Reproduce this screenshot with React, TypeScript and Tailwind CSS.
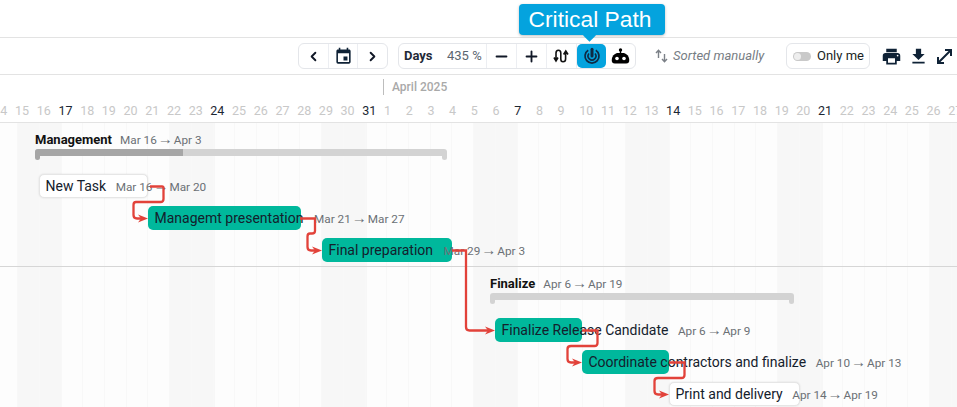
// Gantt chart view, critical path tooltip open
import { ChevronLeft, ChevronRight, Minus, Plus } from "lucide-react";
import { MdPrint, MdFileDownload, MdEvent } from "react-icons/md";

const DAY = 21.71;

const dayLabels = [
  14, 15, 16, 17, 18, 19, 20, 21, 22, 23, 24, 25, 26, 27, 28, 29, 30, 31, 1, 2, 3, 4, 5, 6, 7, 8, 9, 10, 11, 12, 13,
  14, 15, 16, 17, 18, 19, 20, 21, 22, 23, 24, 25, 26, 27,
];
// indexes of the mondays, drawn in dark text
const mondays = [3, 10, 17, 24, 31, 38];

const weekends = [17, 170, 322, 473, 625, 778, 930];

const tasks = [
  { name: "New Task", from: "Mar 16", to: "Mar 20", left: 39, top: 174, width: 109, done: false, gap: 9.5 },
  { name: "Managemt presentation", from: "Mar 21", to: "Mar 27", left: 148, top: 206, width: 153, done: true, gap: 10.5 },
  { name: "Final preparation", from: "Mar 29", to: "Apr 3", left: 322, top: 238, width: 130, done: true, gap: 10.5 },
  { name: "Finalize Release Candidate", from: "Apr 6", to: "Apr 9", left: 495, top: 318, width: 87, done: true, gap: 9.5 },
  { name: "Coordinate contractors and finalize", from: "Apr 10", to: "Apr 13", left: 582, top: 350, width: 87, done: true, gap: 9.5 },
  { name: "Print and delivery", from: "Apr 14", to: "Apr 19", left: 669, top: 382, width: 131, done: false, gap: 9.5 },
];

const links = [
  "M150 186.5 H162 Q163.5 186.5 163.5 188 V199 Q163.5 202 160.5 202 H136 Q133.5 202 133.5 205 V215 Q133.5 218.5 137 218.5 H142",
  "M300 218.5 H315 V231 Q315 233.5 312 233.5 H310 Q307.5 233.5 307.5 236.5 V247 Q307.5 250.5 311 250.5 H316",
  "M452 250.5 H466 V327 Q466 330.5 469.5 330.5 H489",
  "M582 330.5 H597.5 V343 Q597.5 346 594.5 346 H571 Q567.5 346 567.5 349 V359 Q567.5 362.5 571 362.5 H576",
  "M669 362.5 H684.5 V375 Q684.5 378 681.5 378 H658 Q654.5 378 654.5 381 V391 Q654.5 394.5 658 394.5 H663",
];

const arrowHeads = [
  "M148 218.5 L138 214.5 L141 218.5 L138 222.5 Z",
  "M322 250.5 L312 246.5 L315 250.5 L312 254.5 Z",
  "M495 330.5 L485 326.5 L488 330.5 L485 334.5 Z",
  "M582 362.5 L572 358.5 L575 362.5 L572 366.5 Z",
  "M669 394.5 L659 390.5 L662 394.5 L659 398.5 Z",
];

function Dates({ from, to }: { from: string; to: string }) {
  return (
    <span className="text-[11.75px] text-[#6b7075] whitespace-nowrap">
      {from}
      <span className="inline-block w-[17px] text-center leading-none text-[15px] font-['Liberation_Sans',sans-serif]">→</span>
      {to}
    </span>
  );
}

function SummaryBar({ left, width, progress }: { left: number; width: number; progress: number }) {
  return (
    <div className="absolute h-[7px] bg-[#d3d3d3] rounded-t-[3px]" style={{ left, width }}>
      <div className="h-full bg-[#a6a6a6] rounded-tl-[3px]" style={{ width: progress }} />
      <div className={`absolute left-0 top-[6px] w-[5px] h-[5px] rounded-b-[3px] ${progress ? "bg-[#a6a6a6]" : "bg-[#d3d3d3]"}`} />
      <div className="absolute right-0 top-[6px] w-[5px] h-[5px] rounded-b-[3px] bg-[#d3d3d3]" />
    </div>
  );
}

function IconCell({ children, active }: { children: React.ReactNode; active?: boolean }) {
  return (
    <div
      className={`flex-1 h-full flex items-center justify-center border-r border-[#eceef2] last:border-r-0 ${
        active ? "bg-[#04a3de] rounded-[5px] border-r-0" : ""
      }`}
    >
      {children}
    </div>
  );
}

export default function App() {
  return (
    <div className="w-[957px] h-[407px] overflow-hidden bg-white relative font-['Roboto',sans-serif] text-[#1a2433]">
      {/* space above the toolbar */}
      <div className="h-[38px] border-b border-[#e3e3e3]" />

      {/* toolbar */}
      <div className="h-[37px] border-b border-[#e3e3e3] flex items-center pl-[298px]">
        <div className="w-[90px] h-[26px] flex border border-[#e4e6ea] rounded-[6px]">
          <IconCell><ChevronLeft size={15} strokeWidth={3} color="#111827" /></IconCell>
          <IconCell><MdEvent size={19} color="#0f2236" /></IconCell>
          <IconCell><ChevronRight size={15} strokeWidth={3} color="#111827" /></IconCell>
        </div>

        <div className="ml-[10px] w-[238px] h-[26px] flex items-center border border-[#e4e6ea] rounded-[6px]">
          <span className="ml-[5px] w-[43px] text-[13px] font-bold text-[#1f2a37]">Days</span>
          <span className="w-[39px] text-[13px] text-[#5c6670]">435 %</span>
          <div className="flex-1 h-full flex border-l border-[#eceef2]">
            <IconCell><Minus size={17} strokeWidth={2.6} color="#111827" /></IconCell>
            <IconCell><Plus size={17} strokeWidth={2.6} color="#111827" /></IconCell>
            <IconCell>
              <svg width="17" height="16" viewBox="0 0 17 16" fill="none" stroke="#111" strokeWidth="1.6">
                <path d="M1 9.5 L3 13 L5 9.5 M3 12.5 V5 Q3 2.2 5.4 2.2 Q7.8 2.2 7.8 5 V11 Q7.8 13.8 10 13.8 Q12.6 13.8 12.6 11 V3.5 M10.6 6.5 L12.8 3 L15 6.5" />
              </svg>
            </IconCell>
            <IconCell active>
              <svg width="20" height="20" viewBox="0 0 20 20" fill="none" stroke="#0f2a44">
                <path d="M6.2 4.2 A7 7 0 1 0 13.8 4.2" strokeWidth="1.7" />
                <path d="M7 7.5 A3.9 3.9 0 1 0 13 7.5" strokeWidth="1.6" />
                <path d="M10 3.2 V10" strokeWidth="3" strokeLinecap="round" />
              </svg>
            </IconCell>
            <IconCell>
              <svg width="19" height="17" viewBox="0 0 19 17" fill="#000">
                <circle cx="9.5" cy="1.9" r="1.7" />
                <rect x="8.8" y="2.5" width="1.4" height="4" />
                <path d="M6 5 H13 Q17.5 6.5 18.2 11 Q18.8 15.5 15 15.5 H4 Q0.2 15.5 0.8 11 Q1.5 6.5 6 5 Z" />
                <circle cx="6" cy="10.5" r="1.8" fill="#fff" />
                <circle cx="13" cy="10.5" r="1.8" fill="#fff" />
              </svg>
            </IconCell>
          </div>
        </div>

        <svg className="ml-[19px]" width="13" height="14" viewBox="0 0 13 14" fill="none" stroke="#7b8087" strokeWidth="1.4">
          <path d="M1 4 L3.5 1.2 L6 4 M3.5 1.5 V9" />
          <path d="M7 10 L9.5 12.8 L12 10 M9.5 12.5 V5" />
        </svg>
        <span className="ml-[5px] w-[113px] text-[13px] italic text-[#777d84]">Sorted manually</span>

        <div className="h-[26px] w-[84px] flex items-center pl-[6px] border border-[#e4e6ea] rounded-[6px]">
          <div className="w-[18px] h-[9px] rounded-full bg-[#c9c9c9] relative">
            <div className="absolute left-[1px] top-[1px] w-[7px] h-[7px] rounded-full bg-[#eeeeee]" />
          </div>
          <span className="ml-[6px] text-[13px] text-[#1b1f24]">Only me</span>
        </div>

        <MdPrint className="ml-[11px]" size={21} color="#0f2236" />
        <MdFileDownload className="ml-[6px]" size={21} color="#0f2236" />
        <svg className="ml-[7px]" width="17" height="17" viewBox="0 0 17 17" fill="none" stroke="#0f2236" strokeWidth="2">
          <path d="M2.5 14.5 L14.5 2.5 M9 2 H15 V8 M2 9 V15 H8" />
        </svg>
      </div>

      {/* timeline header */}
      <div className="h-[48px] border-b border-[#e3e3e3] relative">
        <div className="h-[24px] pl-[383px] pt-[4px]">
          <div className="flex items-center h-[16px] border-l border-[#bdbdbd] pl-[8px] text-[12px] font-medium text-[#a9a9a9]">
            April 2025
          </div>
        </div>
        <div className="flex -ml-[6.7px] h-[25px] items-center">
          {dayLabels.map((label, i) => (
            <div
              key={i}
              className={`w-[21.71px] shrink-0 text-left text-[12.5px] ${
                mondays.includes(i) ? "text-[#1c2733]" : "text-[#c8c8c8]"
              }`}
            >
              {label}
            </div>
          ))}
        </div>
      </div>

      {/* weekend stripes and day lines */}
      <div className="absolute left-0 right-0 top-[123px] bottom-0 bg-[#fdfdfd]" />
      {weekends.map((x) => (
        <div key={x} className="absolute top-[123px] bottom-0 w-[45px] bg-[#f7f7f7]" style={{ left: x }} />
      ))}
      {dayLabels.map((_, i) => (
        <div
          key={i}
          className="absolute top-[123px] bottom-0 w-px bg-[#f8f8f8]"
          style={{ left: Math.round(-4.5 + i * DAY) }}
        />
      ))}

      {/* group separator */}
      <div className="absolute left-0 right-0 top-[266px] h-px bg-[#d6d6d6]" />

      {/* groups */}
      <div className="absolute left-[35px] top-[130px] flex items-baseline gap-[8px] whitespace-nowrap">
        <span className="text-[13px] font-bold text-[#111]">Management</span>
        <Dates from="Mar 16" to="Apr 3" />
      </div>
      <div className="absolute left-0 top-[149px] w-full">
        <SummaryBar left={35} width={412} progress={148} />
      </div>

      <div className="absolute left-[490px] top-[274px] flex items-baseline gap-[8px] whitespace-nowrap">
        <span className="text-[13px] font-bold text-[#111]">Finalize</span>
        <Dates from="Apr 6" to="Apr 19" />
      </div>
      <div className="absolute left-0 top-[293px] w-full">
        <SummaryBar left={490} width={304} progress={0} />
      </div>

      {/* task bars */}
      {tasks.map((t) => (
        <div
          key={t.name}
          className={`absolute h-[24px] rounded-[5px] ${
            t.done ? "bg-[#00b89c]" : "bg-white border border-[#e6e6e6] shadow-[0_0_2px_rgba(0,0,0,0.12)]"
          }`}
          style={{ left: t.left, top: t.top, width: t.width }}
        />
      ))}
      {tasks.map((t) => (
        <div
          key={t.name}
          className="absolute h-[24px] flex items-center whitespace-nowrap pl-[6.5px]"
          style={{ left: t.left, top: t.top }}
        >
          <span className="text-[14px] text-[#14202c]">{t.name}</span>
          <span style={{ marginLeft: t.gap }}>
            <Dates from={t.from} to={t.to} />
          </span>
        </div>
      ))}

      {/* critical path links */}
      <svg className="absolute left-0 top-0 pointer-events-none" width="957" height="407" fill="none">
        {links.map((d) => (
          <path key={d} d={d} stroke="#e2423a" strokeWidth="2.3" />
        ))}
        {arrowHeads.map((d) => (
          <path key={d} d={d} fill="#e2423a" />
        ))}
      </svg>

      {/* tooltip */}
      <div className="absolute left-[519px] top-[4px] w-[146px] h-[31px] pr-[4px] rounded-[4px] bg-[#04a3de] shadow-[0_1px_3px_rgba(0,0,0,0.25)] flex items-center justify-center text-white text-[22.8px] font-['Liberation_Sans',sans-serif]">
        Critical Path
        <div className="absolute left-[66px] top-[27px] w-[9px] h-[9px] rotate-45 bg-[#04a3de]" />
      </div>
    </div>
  );
}
